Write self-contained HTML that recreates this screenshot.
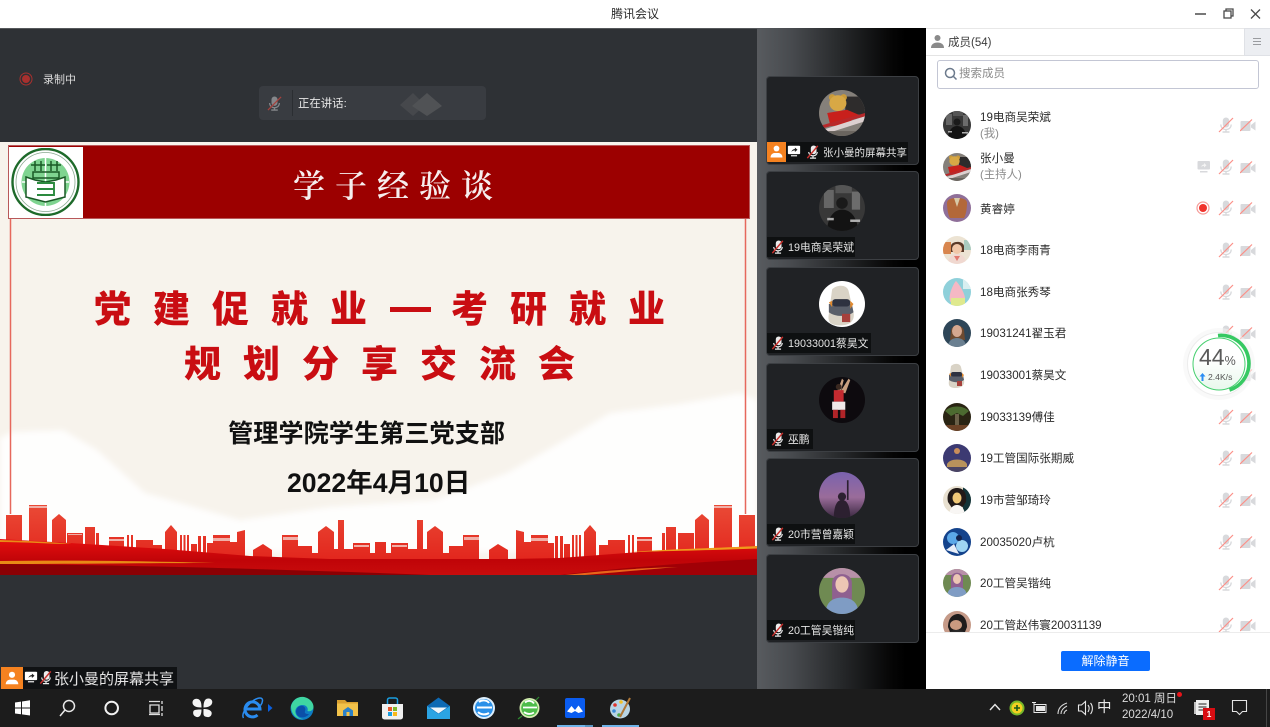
<!DOCTYPE html>
<html><head><meta charset="utf-8"><title>腾讯会议</title>
<style>
html,body{margin:0;padding:0;width:1270px;height:727px;overflow:hidden;background:#2e3135;font-family:"Liberation Sans","Noto Sans CJK SC",sans-serif}
.a{position:absolute}
.t{position:absolute;white-space:nowrap}
.thumb{position:absolute;left:766px;width:151px;height:87px;background:#202225;border:1px solid #3c3f43;border-radius:4px;overflow:hidden}
.thumb svg.av{position:absolute;left:52px;top:13px;width:46px;height:46px}
.tag{position:absolute;left:0;top:65px;height:20px;background:#0e1011;color:#e4e4e4;font-size:10.8px;line-height:22px;white-space:nowrap}
.tag span{position:absolute;left:21px;top:0}
.tag svg{position:absolute;left:4px;top:3px;width:14px;height:14px}
.row{position:absolute;left:0;width:344px;height:41px}
.row svg.av{position:absolute;left:17px;top:6px;width:28px;height:28px}
.nm{position:absolute;left:54px;font-size:11.6px;color:#2b2b2b;white-space:nowrap;line-height:16px}
.sub{position:absolute;left:54px;font-size:11.4px;color:#8c8c8c;white-space:nowrap;line-height:16px}
.mi{position:absolute;left:292px;top:12px;width:16px;height:16px}
.ca{position:absolute;left:314px;top:12px;width:16px;height:16px}
</style></head>
<body>
<svg width="0" height="0" style="position:absolute">
<defs>
<symbol id="mic" viewBox="0 0 16 16"><rect x="4.800" y="0.500" width="6.400" height="10" rx="3.200" fill="#d8d9dc"/><path d="M2.800 7.500c0 3.200 2.300 5 5.200 5s5.200-1.800 5.200-5" fill="none" stroke="#d8d9dc" stroke-width="1.300"/><path d="M8 12.500v2M4.500 15h7" stroke="#d8d9dc" stroke-width="1.400"/><path d="M1 15 15 1" stroke="#fb9088" stroke-width="1.200"/></symbol>
<symbol id="mics" viewBox="0 0 16 16"><rect x="5.500" y="0.500" width="6.500" height="10" rx="3.200" fill="#ececec"/><path d="M3 8c.5 2.800 2.500 4.300 5 4.300s4.500-1.500 5-4.300" fill="none" stroke="#ececec" stroke-width="1.300"/><path d="M8 12.500v1.800M4.500 15h7" stroke="#ececec" stroke-width="1.400"/><path d="M1.500 15 13.500 1" stroke="#c9302c" stroke-width="1.600"/></symbol>
<symbol id="cam" viewBox="0 0 16 16"><rect x="0.500" y="4" width="10" height="10" rx="1" fill="#d8d9dc"/><path d="M11 8 15.500 4.500v9L11 10.500z" fill="#d8d9dc"/><path d="M0 14 12 2.500" stroke="#fb9088" stroke-width="1.200"/></symbol>
<symbol id="scr" viewBox="0 0 16 16"><rect x="1" y="2" width="14" height="9.500" rx="1" fill="#fff"/><path d="M5 9c.5-2 2-3.200 4-3.300V4l3 2.600-3 2.500V7.300C7.500 7.300 6 8 5 9z" fill="#222"/><rect x="4.500" y="12.800" width="7" height="1.300" fill="#fff"/></symbol>
<symbol id="usr" viewBox="0 0 20 20"><circle cx="10" cy="6.500" r="3.400" fill="#fff"/><path d="M3 17c0-3 2-4.800 4.500-5.200h5c2.500.4 4.500 2.200 4.500 5.200z" fill="#fff"/></symbol>

<clipPath id="c"><circle cx="14" cy="14" r="14"/></clipPath>
<symbol id="a1" viewBox="0 0 28 28"><g clip-path="url(#c)"><rect width="28" height="28" fill="#383838"/><rect x="3" y="3" width="6" height="11" fill="#666"/><rect x="20" y="4" width="5" height="11" fill="#6c6c6c"/><rect x="10" y="0" width="10" height="5" fill="#555"/><circle cx="14" cy="11" r="3.500" fill="#1a1a1a"/><path d="M5 28c0-8 4-13 9-13s9 4 10 13z" fill="#131313"/><rect x="5" y="20" width="4" height="1.500" fill="#aaa"/><rect x="19" y="21" width="6" height="1.500" fill="#b0b0b0"/></g></symbol>
<symbol id="a2" viewBox="0 0 28 28"><g clip-path="url(#c)"><rect width="28" height="28" fill="#85807a"/><rect x="16" y="4" width="12" height="11" fill="#2e2c2c"/><circle cx="8" cy="4.500" r="2" fill="#c99a3a"/><circle cx="15" cy="4.500" r="2" fill="#c99a3a"/><ellipse cx="11.500" cy="8" rx="5.200" ry="4.800" fill="#d8a845"/><path d="M5 14l12-2 7 3-4 3-1 3-12 1z" fill="#c8201c"/><path d="M0 25 28 16v3L0 28z" fill="#dcd0d0"/><path d="M0 22 28 14v2L0 24z" fill="#b8282a"/><rect y="25" width="28" height="3" fill="#6a655f"/></g></symbol>
<symbol id="a3" viewBox="0 0 28 28"><g clip-path="url(#c)"><rect width="28" height="28" fill="#8f6f99"/><path d="M4 9c0-3 3-5 10-5s10 2 10 5c0 5-1 12-3 15H7C5 21 4 14 4 9z" fill="#b3683a"/><path d="M11 4h6l-3 9z" fill="#d8c9a8"/></g></symbol>
<symbol id="a4" viewBox="0 0 28 28"><g clip-path="url(#c)"><rect width="28" height="28" fill="#ece3d3"/><rect width="8" height="12" y="6" fill="#d8864e"/><rect x="21" y="4" width="7" height="10" fill="#a9cbbf"/><path d="M8 10c0-5 12-6 13 0v6H8z" fill="#5a3a28"/><circle cx="14" cy="13" r="5" fill="#f1c7a8"/><path d="M5 28c0-7 4-10 9-10s9 3 9 10z" fill="#f0d8d0"/><path d="M11 20l3 5 3-5z" fill="#e27a70"/></g></symbol>
<symbol id="a5" viewBox="0 0 28 28"><g clip-path="url(#c)"><rect width="28" height="28" fill="#8fd0da"/><path d="M13 3c3 3 9 12 9 18s-13 7-15 2S10 6 13 3z" fill="#f5b8c4"/><rect x="8" y="20" width="14" height="8" fill="#dfe98e"/><path d="M20 2h8v9h-8z" fill="#d8eef0"/></g></symbol>
<symbol id="a6" viewBox="0 0 28 28"><g clip-path="url(#c)"><rect width="28" height="28" fill="#2e4658"/><path d="M8 12c0-6 10-8 13-1l1 10H7z" fill="#6d4a30"/><ellipse cx="14" cy="12" rx="5" ry="6" fill="#d5a890"/><path d="M5 28c0-6 4-9 9-9s9 3 9 9z" fill="#6a7f90"/></g></symbol>
<symbol id="a7" viewBox="0 0 28 28"><g clip-path="url(#c)"><rect width="28" height="28" fill="#fff"/><path d="M8 5c3-3 9-3 10 1l3 13c1 5-2 8-8 8s-8-2-7-7z" fill="#d9d3c6"/><path d="M6 14h14l1 5c-4 3-11 3-15 0z" fill="#5a5f6a"/><rect x="8" y="11" width="11" height="4.500" rx="2" fill="#2e3240"/><path d="M6 13l2-1v4zM21 14l-2-2v5z" fill="#e08a30"/><rect x="14" y="20" width="5" height="5" fill="#a6403c"/></g></symbol>
<symbol id="a8" viewBox="0 0 28 28"><g clip-path="url(#c)"><rect width="28" height="28" fill="#2a2413"/><path d="M2 8c6-6 18-6 24 0l-6 5-6-3-6 3z" fill="#4c6a30"/><rect x="12" y="11" width="4" height="14" fill="#6a6048"/><rect y="22" width="28" height="6" fill="#6b4226"/></g></symbol>
<symbol id="a9" viewBox="0 0 28 28"><g clip-path="url(#c)"><rect width="28" height="28" fill="#3c3a72"/><circle cx="14" cy="7" r="3" fill="#c98d5b"/><path d="M4 20c3-6 17-6 20 0v3H4z" fill="#b8925c"/><rect y="23" width="28" height="5" fill="#4a4464"/></g></symbol>
<symbol id="a10" viewBox="0 0 28 28"><g clip-path="url(#c)"><rect width="28" height="28" fill="#e8e0d0"/><rect x="20" width="8" height="28" fill="#123338"/><path d="M5 16c-2-9 3-14 9-14s10 4 9 14l-4 6H9z" fill="#221a18"/><ellipse cx="14" cy="12" rx="4.500" ry="5.500" fill="#f0c878"/><path d="M6 28c1-6 4-9 8-9s7 3 8 9z" fill="#f8f6f4"/></g></symbol>
<symbol id="a11" viewBox="0 0 28 28"><g clip-path="url(#c)"><rect width="28" height="28" fill="#14438c"/><circle cx="10" cy="10" r="6" fill="#5ba8e8"/><circle cx="19" cy="18" r="6" fill="#9fd6f4"/><path d="M3 22l8-6 5 10z" fill="#e8eef8"/><circle cx="16" cy="10" r="3" fill="#12224c"/></g></symbol>
<symbol id="a12" viewBox="0 0 28 28"><g clip-path="url(#c)"><rect width="28" height="28" fill="#6f8a52"/><rect width="28" height="6" fill="#b890a8"/><path d="M8 9c0-7 12-7 12 0v13H8z" fill="#8f6090"/><ellipse cx="14" cy="10" rx="4" ry="5" fill="#ecc6b4"/><path d="M4 28c0-7 4-10 10-10s10 3 10 10z" fill="#7f9cc4"/></g></symbol>
<symbol id="a13" viewBox="0 0 28 28"><g clip-path="url(#c)"><rect width="28" height="28" fill="#c59a88"/><path d="M5 16C5 6 11 3 15 3s9 4 9 13l-2 5H7z" fill="#1f1c1c"/><ellipse cx="13" cy="14" rx="6" ry="5" fill="#c99a80"/><path d="M3 28c1-7 5-9 11-9s10 3 11 9z" fill="#2b2a2a"/></g></symbol>
<symbol id="a14" viewBox="0 0 28 28"><g clip-path="url(#c)"><rect width="28" height="28" fill="#0d0a0e"/><path d="M13 9 18 1l1 1-3 8z" fill="#c8a080"/><path d="M11 9 14 1l1 1-2 8z" fill="#c8a080"/><circle cx="12" cy="6" r="1.800" fill="#3a2820"/><rect x="9" y="8" width="6" height="7" fill="#c42a30"/><rect x="8" y="15" width="8" height="5" fill="#f0e8e8"/><rect x="8.500" y="20" width="3" height="5" fill="#b02428"/><rect x="13" y="20" width="3" height="5" fill="#b02428"/></g></symbol>
<symbol id="a15" viewBox="0 0 28 28"><defs><linearGradient id="pg" x1="0" y1="0" x2="0" y2="1"><stop offset="0" stop-color="#7a62ae"/><stop offset=".55" stop-color="#9a6c9a"/><stop offset="1" stop-color="#3a2840"/></linearGradient></defs><g clip-path="url(#c)"><rect width="28" height="28" fill="url(#pg)"/><path d="M9 28c0-5 1-11 5-11s5 6 5 11z" fill="#2c2030"/><circle cx="14" cy="15" r="2.500" fill="#2c2030"/><rect x="17" y="5" width="1" height="12" fill="#2c2030"/></g></symbol>
</defs></svg>

<!-- title bar -->
<div class="a" style="left:0;top:0;width:1270px;height:28px;background:#fff"></div>
<div class="t" style="left:611px;top:6px;font-size:12px;line-height:16px;color:#2b2b2b">腾讯会议</div>
<svg class="a" style="left:1190px;top:6px" width="78" height="16" fill="none" stroke="#4a4a4a" stroke-width="1.300">
<path d="M5 8h11" stroke-width="1.500"/><rect x="34" y="5" width="7" height="7"/><path d="M36 5V3h7v7h-2"/><path d="M61 3.500l9 9M70 3.500l-9 9"/></svg>

<!-- main dark -->
<div class="a" style="left:0;top:28px;width:757px;height:661px;background:#2e3135;border-top:1px solid #55585b;box-sizing:border-box"></div>
<svg class="a" style="left:19px;top:72px" width="14" height="14"><circle cx="7" cy="7" r="6" fill="none" stroke="#a8302e" stroke-width="1"/><circle cx="7" cy="7" r="4" fill="#a8302e"/></svg>
<div class="t" style="left:43px;top:72px;font-size:11px;line-height:16px;color:#dcdcdc">录制中</div>
<div class="a" style="left:259px;top:86px;width:227px;height:34px;background:#393c41;border-radius:4px"></div>
<div class="a" style="left:292px;top:90px;width:1px;height:26px;background:#2b2e32"></div>
<svg class="a" style="left:267px;top:96px" width="15" height="15" viewBox="0 0 16 16"><rect x="4.800" y="0.500" width="6.400" height="10" rx="3.200" fill="#85878b"/><path d="M2.800 7.500c0 3.200 2.300 5 5.200 5s5.200-1.800 5.200-5" fill="none" stroke="#85878b" stroke-width="1.300"/><path d="M8 12.500v2M4.500 15h7" stroke="#85878b" stroke-width="1.400"/><path d="M1 15 15 1" stroke="#a8403c" stroke-width="1.300"/></svg>
<div class="t" style="left:298px;top:96px;font-size:11.400px;line-height:16px;color:#e6e6e6">正在讲话:</div>
<svg class="a" style="left:399px;top:91px" width="46" height="25"><path d="M1 14 14 2l12 12-12 11z" fill="#46484c"/><path d="M13 15 28 2l15 13-15 10z" fill="#505255"/></svg>

<!-- slide -->
<div class="a" style="left:0;top:142px;width:757px;height:433px;background:#f7f3ec;overflow:hidden">
<svg class="a" style="left:0;top:0" width="757" height="433">
<defs>
<linearGradient id="rb" x1="0" y1="0" x2="0" y2="1"><stop offset="0" stop-color="#e60f0f"/><stop offset=".6" stop-color="#c00408"/><stop offset="1" stop-color="#c80c0c"/></linearGradient>
<linearGradient id="bd" gradientUnits="userSpaceOnUse" x1="0" y1="363" x2="0" y2="420"><stop offset="0" stop-color="#ea4a36"/><stop offset="1" stop-color="#e2251c"/></linearGradient>
<g id="bl" fill="url(#bd)">
<rect x="6" y="373" width="16" height="47"/><rect x="29" y="363" width="18" height="57"/><path d="M52 378 59 372 66 378V420H52z"/><rect x="67" y="391" width="16" height="29"/><rect x="85" y="385" width="10" height="35"/><rect x="96" y="391" width="3" height="29"/><rect x="109" y="395" width="15" height="25"/><rect x="127" y="393" width="2" height="27"/><rect x="131" y="393" width="2" height="27"/><rect x="136" y="398" width="17" height="22"/><rect x="153" y="403" width="9" height="17"/><path d="M165 390 171 383 177 390V420H165z"/><rect x="180" y="393" width="2" height="27"/><rect x="183.500" y="393" width="2" height="27"/><rect x="187" y="393" width="2" height="27"/><rect x="191" y="402" width="6" height="18"/><rect x="198" y="394" width="3" height="26"/><rect x="203" y="394" width="3" height="26"/><rect x="207" y="401" width="6" height="19"/><rect x="213" y="393" width="17" height="29"/><rect x="230" y="400" width="7" height="22"/><path d="M237 390 245 388V425H237z"/><path d="M253 408 263 402 272 408V425H253z"/><rect x="282" y="393" width="16" height="32"/><rect x="298" y="404" width="14" height="21"/><path d="M318 390 326 384 334 390V425H318z"/><rect x="338" y="378" width="6" height="47"/><rect x="334" y="407" width="20" height="18"/><rect x="312" y="411" width="70" height="14"/><rect x="353" y="401" width="17" height="24"/><rect x="376" y="400" width="10" height="25"/>
</g>
<filter id="bl2"><feGaussianBlur stdDeviation="3"/></filter>
</defs>
<path d="M0 296 12 290 63 288 97 308 145 351 240 378 330 365 435 358 507 331 570 295 610 271 680 262 740 251 757 258V410H0z" fill="#fff" fill-opacity=".9" filter="url(#bl2)"/>
<path d="M10.500 76V372" stroke="#e6685c" stroke-width="1.500"/><path d="M745.500 76V372" stroke="#e6685c" stroke-width="1.500"/>
<use href="#bl"/><use href="#bl" transform="translate(761) scale(-1,1)"/>
<g fill="#f0b0a8"><rect x="29" y="364" width="18" height="2"/><rect x="68" y="392" width="14" height="1"/><rect x="109" y="397" width="15" height="2"/><rect x="213" y="396" width="17" height="3"/><rect x="283" y="395" width="15" height="3"/><rect x="354" y="403" width="15" height="2"/><rect x="392" y="403" width="15" height="2"/><rect x="464" y="395" width="15" height="3"/><rect x="531" y="396" width="17" height="3"/><rect x="637" y="397" width="15" height="2"/><rect x="714" y="364" width="18" height="2"/></g>
<path d="M0 397 70 401 165 407 250 414 330 417 505 417 560 416 640 410 757 404V433H0z" fill="url(#rb)"/>
<path d="M0 422C120 423 280 427 430 433H0z" fill="#8a0004"/>
<path d="M757 417C680 421 610 427 560 433H757z" fill="#a00006"/>
<path d="M0 419C70 418 150 419 215 421C150 421 70 422 0 422z" fill="#e88a16"/>
<path d="M0 398C30 399 50 400 72 402C50 402 25 400 0 400z" fill="#ea8a18"/>
<path d="M565 433C600 429 640 426 678 425C640 428 610 431 585 433z" fill="#e8661a"/>
<path d="M630 410C670 407 720 406 757 404V406.500C720 408 670 409 630 410z" fill="#f09a1c"/>
</svg>
<div class="a" style="left:8px;top:3px;width:740px;height:72px;background:#9c0000;border:1px solid #b8585a"></div>
<div class="a" style="left:9px;top:5px;width:74px;height:71px;background:#fff"></div>
<svg class="a" style="left:11px;top:6px" width="70" height="68">
<circle cx="34.500" cy="34" r="33" fill="#fff" stroke="#1e6a2a" stroke-width="2.400"/>
<circle cx="34.500" cy="34" r="29.500" fill="none" stroke="#8aa890" stroke-width=".8"/>
<circle cx="34.500" cy="34" r="24" fill="#7fd490"/>
<path d="M11 34h47M34.500 10v48" stroke="#fff" stroke-width="1.500"/>
<path d="M15 29 24 32 34.500 34 45 32 54 29v20L34.500 54 15 49z" fill="#fff" stroke="#1a5a26" stroke-width="1.500"/>
<path d="M24 13v10M30 13v10M40 13v10M46 13v10M20 17h14M36 17h14M22 24h26v6H22z" stroke="#1a5a26" stroke-width="1.500" fill="none"/>
<path d="M26 35h17v12H26M26 41h17" stroke="#2b8a3e" stroke-width="1.900" fill="none"/>
</svg>
<div class="t" style="left:293px;top:22px;font-family:'Liberation Serif','Noto Serif CJK SC',serif;font-size:32px;line-height:44px;letter-spacing:10px;color:#f6eeee;font-weight:600">学子经验谈</div>
<div class="t" style="left:94px;top:143px;font-size:37px;line-height:50px;letter-spacing:22px;font-weight:900;color:#c90d12">党建促就业</div>
<div class="a" style="left:390px;top:165px;width:41px;height:5px;background:#c90d12"></div>
<div class="t" style="left:451px;top:143px;font-size:37px;line-height:50px;letter-spacing:22px;font-weight:900;color:#c90d12">考研就业</div>
<div class="t" style="left:184px;top:198px;font-size:37px;line-height:50px;letter-spacing:22px;font-weight:900;color:#c90d12">规划分享交流会</div>
<div class="t" style="left:228px;top:275px;font-size:25.200px;line-height:34px;font-weight:700;color:#111">管理学院学生第三党支部</div>
<div class="t" style="left:287px;top:323px;font-size:26.600px;line-height:36px;font-weight:700;color:#111">2022年4月10日</div>
</div>

<!-- name tag bottom-left -->
<div class="a" style="left:1px;top:667px;width:176px;height:22px;background:#101214"></div>
<div class="a" style="left:1px;top:667px;width:22px;height:22px;background:#f58220"></div>
<svg class="a" style="left:3px;top:669px" width="18" height="18"><use href="#usr"/></svg>
<svg class="a" style="left:24px;top:670px" width="14" height="14"><use href="#scr"/></svg>
<svg class="a" style="left:39px;top:670px" width="14" height="15"><use href="#mics"/></svg>
<div class="t" style="left:54px;top:670px;font-size:15px;line-height:19px;color:#e4e4e4">张小曼的屏幕共享</div>

<!-- thumbnail strip -->
<div class="a" style="left:757px;top:28px;width:169px;height:661px;background:linear-gradient(90deg,#585b5f 0%,#484b4f 20%,#26282a 50%,#050505 80%,#000 88%,#000 100%)"></div>
<div class="thumb" style="top:76px"><svg class="av"><use href="#a2"/></svg>
<div class="tag" style="width:141px"><div class="a" style="left:0;top:0;width:19px;height:20px;background:#f58220"></div><svg style="left:1px;top:1px;width:17px;height:17px"><use href="#usr"/></svg><svg style="left:20px;top:2px"><use href="#scr"/></svg><svg style="left:39px;top:3px"><use href="#mics"/></svg><span style="left:56px;font-size:10.500px">张小曼的屏幕共享</span></div></div>
<div class="thumb" style="top:171px"><svg class="av"><use href="#a1"/></svg><div class="tag" style="width:88px"><svg><use href="#mics"/></svg><span>19电商吴荣斌</span></div></div>
<div class="thumb" style="top:267px"><svg class="av"><use href="#a7"/></svg><div class="tag" style="width:104px"><svg><use href="#mics"/></svg><span>19033001蔡昊文</span></div></div>
<div class="thumb" style="top:363px"><svg class="av"><use href="#a14"/></svg><div class="tag" style="width:46px"><svg><use href="#mics"/></svg><span>巫鹏</span></div></div>
<div class="thumb" style="top:458px"><svg class="av"><use href="#a15"/></svg><div class="tag" style="width:88px"><svg><use href="#mics"/></svg><span>20市营曾嘉颖</span></div></div>
<div class="thumb" style="top:554px"><svg class="av"><use href="#a12"/></svg><div class="tag" style="width:88px"><svg><use href="#mics"/></svg><span>20工管吴锴纯</span></div></div>

<!-- right panel -->
<div class="a" style="left:926px;top:28px;width:344px;height:661px;background:#fff"></div>
<div class="a" style="left:926px;top:55px;width:344px;height:1px;background:#e4e4e4"></div>
<div class="a" style="left:926px;top:28px;width:344px;height:1px;background:#e8e8e8"></div>
<svg class="a" style="left:930px;top:34px" width="15" height="15"><circle cx="7.500" cy="4" r="3" fill="#8a8a8a"/><path d="M1 14c0-3.500 2.500-5.500 6.500-5.500S14 10.500 14 14z" fill="#8a8a8a"/></svg>
<div class="t" style="left:948px;top:35px;font-size:11.500px;line-height:16px;color:#3c3c3c">成员(54)</div>
<div class="a" style="left:1244px;top:28px;width:25px;height:26px;background:#eceef2;border:1px solid #dfe1e6"></div>
<svg class="a" style="left:1251px;top:37px" width="12" height="10" stroke="#9a9ca0" stroke-width="1"><path d="M2 1.500h8M2 4.500h8M2 7.500h8"/></svg>
<div class="a" style="left:937px;top:60px;width:320px;height:27px;border:1px solid #c3c6d4;border-radius:3px;background:#fff"></div>
<svg class="a" style="left:944px;top:67px" width="14" height="14" fill="none" stroke="#6c7a8c" stroke-width="1.500"><circle cx="6" cy="6" r="4.500"/><path d="M9.500 9.500 12.500 12.500"/></svg>
<div class="t" style="left:959px;top:66px;font-size:11.500px;line-height:16px;color:#8a8a8a">搜索成员</div>

<div class="a" style="left:926px;top:104px;width:344px;height:528px;overflow:hidden">
<div class="row" style="top:1px"><svg class="av"><use href="#a1"/></svg><div class="nm" style="top:5px">19电商吴荣斌</div><div class="sub" style="top:21px">(我)</div><svg class="mi"><use href="#mic"/></svg><svg class="ca"><use href="#cam"/></svg></div>
<div class="row" style="top:42.700px"><svg class="av"><use href="#a2"/></svg><div class="nm" style="top:4px">张小曼</div><div class="sub" style="top:20px">(主持人)</div><svg class="a" style="left:271px;top:13px" width="14" height="14"><rect x="0.500" y="1" width="12.500" height="8.500" rx="1" fill="#d8d9dc"/><path d="M4 7c.5-1.500 1.500-2.500 3-2.500V3l2.500 2.300L7 7.500V6C5.800 6 4.800 6.300 4 7z" fill="#f4f4f4"/><rect x="3" y="11" width="7.500" height="1.500" fill="#d8d9dc"/></svg><svg class="mi"><use href="#mic"/></svg><svg class="ca"><use href="#cam"/></svg></div>
<div class="row" style="top:84.300px"><svg class="av"><use href="#a3"/></svg><div class="nm" style="top:14px">黄睿婷</div><svg class="a" style="left:270px;top:13px" width="14" height="14"><circle cx="7" cy="7" r="6" fill="#fff" stroke="#f59a96" stroke-width="1.200"/><circle cx="7" cy="7" r="4" fill="#f0332c"/></svg><svg class="mi"><use href="#mic"/></svg><svg class="ca"><use href="#cam"/></svg></div>
<div class="row" style="top:126px"><svg class="av"><use href="#a4"/></svg><div class="nm" style="top:13px">18电商李雨青</div><svg class="mi"><use href="#mic"/></svg><svg class="ca"><use href="#cam"/></svg></div>
<div class="row" style="top:167.700px"><svg class="av"><use href="#a5"/></svg><div class="nm" style="top:13px">18电商张秀琴</div><svg class="mi"><use href="#mic"/></svg><svg class="ca"><use href="#cam"/></svg></div>
<div class="row" style="top:209.300px"><svg class="av"><use href="#a6"/></svg><div class="nm" style="top:13px">19031241翟玉君</div><svg class="mi"><use href="#mic"/></svg><svg class="ca"><use href="#cam"/></svg></div>
<div class="row" style="top:251px"><svg class="av"><use href="#a7"/></svg><div class="nm" style="top:13px">19033001蔡昊文</div><svg class="mi"><use href="#mic"/></svg><svg class="ca"><use href="#cam"/></svg></div>
<div class="row" style="top:292.700px"><svg class="av"><use href="#a8"/></svg><div class="nm" style="top:13px">19033139傅佳</div><svg class="mi"><use href="#mic"/></svg><svg class="ca"><use href="#cam"/></svg></div>
<div class="row" style="top:334.300px"><svg class="av"><use href="#a9"/></svg><div class="nm" style="top:13px">19工管国际张期威</div><svg class="mi"><use href="#mic"/></svg><svg class="ca"><use href="#cam"/></svg></div>
<div class="row" style="top:376px"><svg class="av"><use href="#a10"/></svg><div class="nm" style="top:13px">19市营邹琦玲</div><svg class="mi"><use href="#mic"/></svg><svg class="ca"><use href="#cam"/></svg></div>
<div class="row" style="top:417.700px"><svg class="av"><use href="#a11"/></svg><div class="nm" style="top:13px">20035020卢杭</div><svg class="mi"><use href="#mic"/></svg><svg class="ca"><use href="#cam"/></svg></div>
<div class="row" style="top:459.300px"><svg class="av"><use href="#a12"/></svg><div class="nm" style="top:13px">20工管吴锴纯</div><svg class="mi"><use href="#mic"/></svg><svg class="ca"><use href="#cam"/></svg></div>
<div class="row" style="top:501px"><svg class="av"><use href="#a13"/></svg><div class="nm" style="top:13px">20工管赵伟寰20031139</div><svg class="mi"><use href="#mic"/></svg><svg class="ca"><use href="#cam"/></svg></div>
</div>
<div class="a" style="left:926px;top:632px;width:344px;height:1px;background:#ececec"></div>
<div class="a" style="left:1061px;top:651px;width:89px;height:20px;background:#0a6cff;border-radius:2px;color:#fff;font-size:12px;line-height:20px;text-align:center">解除静音</div>

<!-- floating gauge -->
<svg class="a" style="left:1180px;top:325px" width="78" height="78">
<defs><linearGradient id="gg" x1="0" y1="0" x2="0" y2="1"><stop offset=".4" stop-color="#fff"/><stop offset="1" stop-color="#e8f8ec"/></linearGradient></defs>
<circle cx="39" cy="39" r="36" fill="#f4f4f4" opacity=".55"/>
<circle cx="39" cy="39" r="31.500" fill="#fff" stroke="#ececec" stroke-width="1"/>
<circle cx="39" cy="39" r="26" fill="url(#gg)" stroke="#45cf6e" stroke-width="1"/>
<path d="M38 10.500A28 28 0 0 1 49.500 65" fill="none" stroke="#36c962" stroke-width="3.600"/>
</svg>
<div class="t" style="left:1199px;top:344px;font-size:23px;line-height:26px;color:#5a5a5a">44<span style="font-size:12.500px">%</span></div>
<svg class="a" style="left:1199px;top:372px" width="7" height="10"><path d="M3.500 1 6.500 4.500H4.500V9h-2V4.500H.5z" fill="#2a8ef5"/></svg>
<div class="t" style="left:1208px;top:371px;font-size:8.600px;line-height:12px;color:#555">2.4K/s</div>

<!-- taskbar -->
<div class="a" style="left:0;top:689px;width:1270px;height:38px;background:#1c1c1c"></div>
<svg class="a" style="left:0;top:689px" width="660" height="38">
<g fill="#fff"><path d="M15 13.500 21 12.600V18.500H15zM22 12.500 30 11.300V18.500H22zM15 19.500H21V25.300L15 24.500zM22 19.500H30V26.500L22 25.400z"/></g>
<g fill="none" stroke="#e8e8e8" stroke-width="1.500"><circle cx="69" cy="17" r="5.500"/><path d="M65 21 60 27"/></g>
<circle cx="111.700" cy="19" r="6.300" fill="none" stroke="#f2f2f2" stroke-width="2"/>
<g fill="none" stroke="#e0e0e0" stroke-width="1.300"><path d="M150 16h9v8h-9zM149 12.500h11M149 25.500h11M162 12v3M162 17v5M162 24v3"/></g>
<g fill="#f4f4f4"><path d="M201.500 18.500c-7 0-9-2.500-9-5 0-3 3-4.500 5.500-3.500 3 1 3.500 4.500 3.500 8.500zM203.500 18.500c0-7 2-9 5-9s5 3 3 6c-1 1.500-4 3-8 3zM203.500 20c7 0 9 3 8 5.500-1 3-4 3-6.500 2-2-1-1.500-3.500-1.500-7.500zM201.500 20.500c0 6-2 8-5 7.500-3-1-4-3.500-3-6 1-1.500 4-1.500 8-1.500z"/></g>
<g fill="none" stroke="#2a8cf0"><path d="M245.500 20H260A7.500 7.500 0 1 0 257.500 26" stroke-width="3"/><path d="M243.500 29C240 24 252 9 260 9c4 0 2.500 5 .5 7.500" stroke-width="1.500"/></g><path d="M268 15l4.500 4-4.500 4z" fill="#0a60e0"/>
<g><circle cx="302" cy="19.500" r="11.500" fill="#0e7cc4"/><path d="M291 17c2-7 8-10 13-9 5 1 9.500 5 9.500 10 0 3-3 5-6 4 1-3-1-6-5-6-5 0-8 4-7 8 1 4 5 6 8 6-6 1-12.500-4-12.500-13z" fill="#3fd6a2"/><path d="M296 22c1-4 4-6 7-5 2 1 3 3 2 5-1 3 2 3 4 3-2 3-6 4-9 3-3-1-4-4-4-6z" fill="#0b4fa8"/></g>
<g><path d="M337 11h8l2 2h11v14h-21z" fill="#d9a030"/><rect x="337" y="14.500" width="21" height="12.500" fill="#f2c24a"/><path d="M343 21.500 348 18 353 21.500V27H343z" fill="#2a80c8"/><rect x="346.500" y="23" width="3" height="4" fill="#f2c24a"/></g>
<g><path d="M382 15h21v13a2.500 2.500 0 0 1-2.500 2.500h-16A2.500 2.500 0 0 1 382 28z" fill="#f0f0f0"/><path d="M387.500 15v-4a2 2 0 0 1 2-2h6a2 2 0 0 1 2 2v4" fill="none" stroke="#1a9ee0" stroke-width="1.500"/><rect x="388" y="18" width="4" height="4" fill="#e8562a"/><rect x="393" y="18" width="4" height="4" fill="#7cb82a"/><rect x="388" y="23" width="4" height="4" fill="#1a9ee0"/><rect x="393" y="23" width="4" height="4" fill="#f8b81a"/></g>
<g><path d="M427 17 438.500 8.500 450 17v13h-23z" fill="#0e6ab4"/><path d="M427 17 438.500 25 450 17v13h-23z" fill="#2ba4e4"/><path d="M430 18.500h17l-8.500 6z" fill="#f0f6fa"/></g>
<g><circle cx="484" cy="19" r="11" fill="#dceefc"/><circle cx="484" cy="19" r="9" fill="#2a90e8"/><path d="M477 18.500h15M479 13c3-2.500 8-2 10 1M478 23c3 3 8 3 11 1" fill="none" stroke="#fff" stroke-width="2"/></g>
<g><circle cx="529.500" cy="19" r="10" fill="#d4eeb0"/><circle cx="529.500" cy="19" r="8.300" fill="#4ebc4a"/><path d="M523 18.500h14M525 13.500c3-2.500 7-2 9 1M524 23c3 2.500 7 2.500 10 .5" fill="none" stroke="#fff" stroke-width="1.800"/><path d="M522 27 518 30M536 11 539 8" stroke="#2f8a30" stroke-width="1.200"/></g>
<g><rect x="565" y="9" width="20" height="20" rx="2" fill="#0a5cf0"/><path d="M567 22.500 571.500 17 575 21 578.500 16.500 583 22.500 578.500 24 575 22 571.500 24z" fill="#fff"/></g>
<rect x="557" y="36" width="36" height="2" fill="#6fb3e8"/><rect x="585" y="36" width="8" height="2" fill="#5a94c0"/><rect x="602" y="36" width="37" height="2" fill="#6fb3e8"/>
<g><ellipse cx="620" cy="20" rx="10" ry="9.500" fill="#b8d4e4"/><circle cx="615" cy="16" r="1.800" fill="#e0342c"/><circle cx="621" cy="13" r="1.800" fill="#f2c028"/><circle cx="614" cy="22" r="1.800" fill="#3a8ad8"/><circle cx="619" cy="26" r="1.800" fill="#4aaa48"/><path d="M620 28 630 9" stroke="#b07838" stroke-width="2"/></g>
</svg>
<svg class="a" style="left:985px;top:689px" width="285" height="38">
<path d="M5 21 10 15.500 15 21" fill="none" stroke="#e8e8e8" stroke-width="1.400"/>
<circle cx="32" cy="19" r="7.500" fill="#77b82a"/><circle cx="32" cy="19" r="5.500" fill="#f4d020"/><path d="M29 19h6M32 16v6" stroke="#1a5a1a" stroke-width="1.600"/>
<g fill="none" stroke="#e8e8e8" stroke-width="1"><rect x="49" y="15.500" width="12" height="8"/><path d="M47 13.500h4M49 13.500v6"/></g><rect x="51" y="17" width="9" height="5" fill="#e8e8e8"/>
<g fill="none" stroke="#d8d8d8" stroke-width="1.100"><path d="M73 25c0-5 3-9 9-11M76 25c0-3 2-6 6-8M79 25c0-2 1-3 3-4"/></g>
<g fill="none" stroke="#e8e8e8" stroke-width="1.100"><path d="M93.500 16h3l4-3.500v13l-4-3.500h-3zM103 16c1.500 2 1.500 4.500 0 7M105.500 14c2.500 3 2.500 8 0 11"/></g>
</svg>
<div class="t" style="left:1097px;top:698px;font-size:14.500px;line-height:20px;color:#e8e8e8">中</div>
<div class="t" style="left:1122px;top:691px;font-size:11.500px;line-height:16px;color:#dcdcdc">20:01 周日</div>
<div class="a" style="left:1177px;top:692px;width:5px;height:5px;border-radius:50%;background:#e8141a"></div>
<div class="t" style="left:1122px;top:707px;font-size:11.500px;line-height:16px;color:#dcdcdc">2022/4/10</div>
<svg class="a" style="left:1194px;top:699px" width="24" height="26">
<rect x="0" y="3" width="3" height="12" fill="#bfbfbf"/><rect x="2" y="1" width="13" height="15" fill="#f0f0f0"/><path d="M4.500 5h8M4.500 8h8M4.500 11h5" stroke="#222" stroke-width="1.100"/></svg>
<div class="a" style="left:1203px;top:708px;width:12px;height:12px;background:#d80d12;color:#fff;font-size:8.500px;line-height:12px;text-align:center;font-weight:700">1</div>
<svg class="a" style="left:1231px;top:699px" width="17" height="17" fill="none" stroke="#e4e4e4" stroke-width="1.100"><path d="M1.500 1.500h14v11h-4l-3 3-3-3h-4z"/></svg>
<div class="a" style="left:1266px;top:689px;width:1px;height:38px;background:#454545"></div>
</body></html>
